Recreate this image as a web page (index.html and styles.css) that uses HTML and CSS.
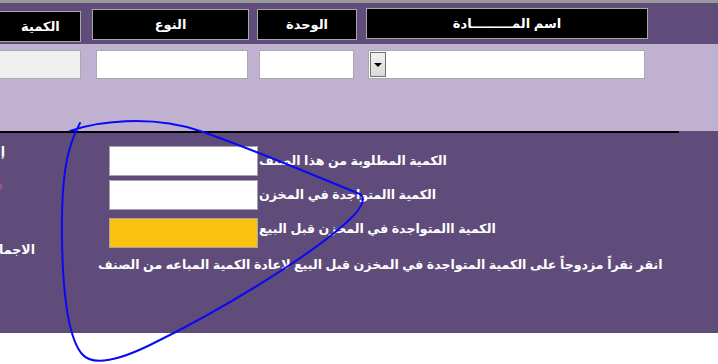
FILE: index.html
```html
<!DOCTYPE html>
<html lang="ar" dir="rtl">

<head>
    <meta charset="UTF-8">
    <title>فاتورة مبيعات</title>
    <link rel="stylesheet" href="styles.css">
</head>

<body>
    <div class="head-band">
        <div class="hcell name">اسم المـــــــــادة</div>
        <div class="hcell unit">الوحدة</div>
        <div class="hcell kind">النوع</div>
        <div class="hcell qty">الكمية</div>
    </div>

    <div class="input-band">
        <div class="combo">
            <span class="combo-btn"></span>
        </div>
        <input class="field unit-field" type="text">
        <input class="field kind-field" type="text">
        <input class="field qty-field" type="text" disabled>
    </div>

    <div class="panel">
        <div class="rule"></div>
        <div class="panel-body">
            <div class="form">
                <div class="row row-1">
                    <label class="lbl">الكمية المطلوبة من هذا الصنف</label>
                    <input class="box" type="text">
                </div>
                <div class="row row-2">
                    <label class="lbl">الكمية االمتواجدة في المخزن</label>
                    <input class="box" type="text">
                </div>
                <div class="row row-3">
                    <label class="lbl raised">الكمية االمتواجدة في المخزن قبل البيع</label>
                    <input class="box yellow" type="text">
                </div>
                <div class="hint">انقر نقراً مزدوجاً على الكمية المتواجدة في المخزن قبل البيع لاعادة الكمية المباعه من الصنف</div>
            </div>
            <div class="side">
                <div class="side-line first">إجمالي الفاتورة</div>
                <div class="side-mark"></div>
                <div class="side-line last">الاجمالي</div>
            </div>
        </div>
    </div>

    <!-- hand drawn mark on top of the screenshot -->
    <svg class="scribble" width="718" height="364" viewBox="0 0 718 364">
        <path d="M 70 131 C 95 122, 150 114, 200 131 C 250 148, 320 178, 360 194 C 367 199, 360 210, 349 220 C 318 250, 230 306, 150 345 C 115 362, 92 366, 82 354 C 70 340, 63 300, 62 240 C 61 180, 66 148, 80 123"
            fill="none" stroke="#0a0af2" stroke-width="2" stroke-linecap="round" />
    </svg>
</body>

</html>
```

FILE: styles.css
```css
html, body {
    margin: 0;
    padding: 0;
}

body {
    width: 718px;
    height: 364px;
    overflow: hidden;
    position: relative;
    background-color: #fff;
    font-family: 'Liberation Sans', 'DejaVu Sans', sans-serif;
    font-weight: bold;
    font-size: 12.6px;
    color: #fff;
}

.head-band {
    height: 41px;
    border-top: 3px solid #9a9a9a;
    background-color: #5f4c7a;
    display: flex;
    align-items: flex-start;
    padding-right: 70px;
    overflow: hidden;
}

.hcell {
    flex: none;
    box-sizing: border-box;
    height: 31px;
    line-height: 29px;
    font-size: 13px;
    background-color: #000;
    border: 1px solid #a8a8a8;
    text-align: center;
    margin-top: 5px;
}

.hcell.name {
    width: 282px;
}

.hcell.unit {
    width: 100px;
    margin-right: 9px;
    margin-top: 6px;
}

.hcell.kind {
    width: 157px;
    margin-right: 8px;
    margin-top: 6px;
}

.hcell.qty {
    width: 110px;
    margin-right: 11px;
    margin-top: 8px;
    text-align: left;
    padding-left: 49px;
}

.input-band {
    height: 87px;
    background-color: #bfb1cf;
    display: flex;
    align-items: flex-start;
    padding-top: 6px;
    padding-right: 73px;
    box-sizing: border-box;
    overflow: hidden;
}

.combo,
.field {
    flex: none;
    box-sizing: border-box;
    height: 29px;
    border: 1px solid #a9a9a9;
    background-color: #fff;
    margin: 0;
}

.combo {
    width: 277px;
    display: flex;
    justify-content: flex-end;
    padding: 1px;
}

.combo-btn {
    width: 16px;
    box-sizing: border-box;
    border: 1px solid #707070;
    background: linear-gradient(#f2f2f2, #d8d8d8);
    display: flex;
    align-items: center;
    justify-content: center;
}

.combo-btn::after {
    content: '';
    border-left: 4px solid transparent;
    border-right: 4px solid transparent;
    border-top: 4px solid #000;
}

.unit-field {
    width: 95px;
    margin-right: 14px;
}

.kind-field {
    width: 152px;
    margin-right: 11px;
}

.qty-field {
    width: 110px;
    margin-right: 15px;
    background-color: #efefef;
}

.panel {
    height: 202px;
    background-color: #5f4c7a;
}

.rule {
    height: 2px;
    width: 679px;
    margin-right: 39px;
    background-color: #000;
}

.panel-body {
    display: flex;
    justify-content: flex-end;
}

.form {
    flex: none;
    margin-left: 69px;
}

.row {
    display: flex;
    align-items: center;
    justify-content: flex-end;
}

.row-1 {
    margin-top: 13px;
}

.row-2 {
    margin-top: 4px;
}

.row-3 {
    margin-top: 8px;
}

.box {
    flex: none;
    box-sizing: border-box;
    width: 149px;
    height: 30px;
    margin: 0;
    border: 1px solid #a6a6a6;
    background-color: #fff;
}

.box.yellow {
    background-color: #fdc110;
}

.lbl {
    white-space: nowrap;
    line-height: 18px;
    margin-left: 1px;
}

.lbl.raised {
    margin-bottom: 9px;
}

.hint {
    white-space: nowrap;
    line-height: 18px;
    margin-top: 8px;
    margin-left: -11px;
}

.side {
    flex: none;
    width: 40px;
    white-space: nowrap;
    padding-top: 10px;
}

.side-line {
    line-height: 18px;
}

.side-line.first {
    margin-right: 35px;
}

.side-mark {
    width: 2px;
    height: 5px;
    background-color: #a0507c;
    margin-top: 23px;
    margin-right: 38px;
}

.side-line.last {
    margin-top: 52px;
    margin-right: 5px;
}

.scribble {
    position: absolute;
    left: 0;
    top: 0;
    pointer-events: none;
}
```
